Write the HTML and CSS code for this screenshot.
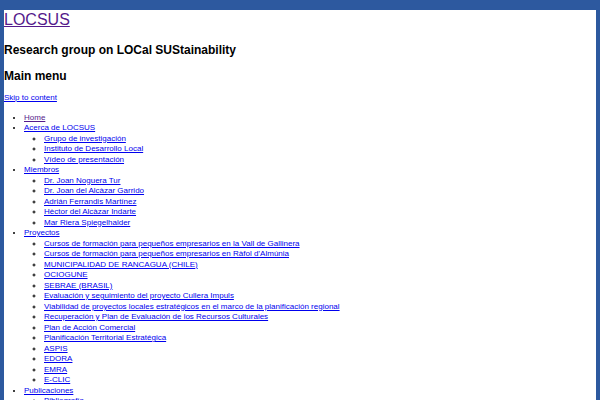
FILE: index.html
```html
<!DOCTYPE html>
<html>
<head>
<meta charset="utf-8">
<title>LOCSUS</title>
<link rel="stylesheet" href="styles.css">
</head>
<body>
<div class="page">
  <header class="site-header">
    <h1 class="site-title"><a class="visited" href="#">LOCSUS</a></h1>
    <h2 class="site-desc">Research group on LOCal SUStainability</h2>
  </header>
  <nav class="main-nav">
    <h3 class="menu-title">Main menu</h3>
    <a class="skip" href="#">Skip to content</a>
    <ul class="menu">
      <li><a class="visited" href="#">Home</a></li>
      <li><a href="#">Acerca de LOCSUS</a>
        <ul class="sub">
          <li><a href="#">Grupo de investigación</a></li>
          <li><a href="#">Instituto de Desarrollo Local</a></li>
          <li><a href="#">Vídeo de presentación</a></li>
        </ul>
      </li>
      <li><a href="#">Miembros</a>
        <ul class="sub">
          <li><a href="#">Dr. Joan Noguera Tur</a></li>
          <li><a href="#">Dr. Joan del Alcàzar Garrido</a></li>
          <li><a href="#">Adrián Ferrandis Martínez</a></li>
          <li><a href="#">Hèctor del Alcàzar Indarte</a></li>
          <li><a href="#">Mar Riera Spiegelhalder</a></li>
        </ul>
      </li>
      <li><a href="#">Proyectos</a>
        <ul class="sub">
          <li><a href="#">Cursos de formación para pequeños empresarios en la Vall de Gallinera</a></li>
          <li><a href="#">Cursos de formación para pequeños empresarios en Ràfol d’Almúnia</a></li>
          <li><a href="#">MUNICIPALIDAD DE RANCAGUA (CHILE)</a></li>
          <li><a href="#">OCIOGUNE</a></li>
          <li><a href="#">SEBRAE (BRASIL)</a></li>
          <li><a href="#">Evaluación y seguimiento del proyecto Cullera Impuls</a></li>
          <li><a href="#">Viabilidad de proyectos locales estratégicos en el marco de la planificación regional</a></li>
          <li><a href="#">Recuperación y Plan de Evaluación de los Recursos Culturales</a></li>
          <li><a href="#">Plan de Acción Comercial</a></li>
          <li><a href="#">Planificación Territorial Estratégica</a></li>
          <li><a href="#">ASPIS</a></li>
          <li><a href="#">EDORA</a></li>
          <li><a href="#">EMRA</a></li>
          <li><a href="#">E-CLIC</a></li>
        </ul>
      </li>
      <li><a href="#">Publicaciones</a>
        <ul class="sub">
          <li><a href="#">Bibliografía</a></li>
          <li><a href="#">Artículos</a></li>
        </ul>
      </li>
    </ul>
  </nav>
</div>
</body>
</html>
```
FILE: styles.css
```css
html {
  background: #2d599f;
  height: 100%;
}
body {
  margin: 10px 4px 0 4px;
  background: #ffffff;
  min-height: calc(100% - 10px);
  font-family: "Liberation Sans", Arial, sans-serif;
  color: #000000;
  overflow: hidden;
}
.page {
  padding-top: 1px;
}
a {
  color: #0000ee;
}
a.visited {
  color: #551a8b;
}
.site-title {
  font-size: 16px;
  font-weight: normal;
  line-height: 18px;
  margin: 0 0 14px 0;
}
.site-desc {
  font-size: 12px;
  font-weight: bold;
  line-height: 14px;
  margin: 0 0 12px 0;
}
.menu-title {
  font-size: 12px;
  font-weight: bold;
  line-height: 14px;
  margin: 0 0 10px 0;
}
.skip {
  display: block;
  width: max-content;
  font-size: 8px;
  line-height: 10.5px;
}
.menu {
  font-size: 8px;
  line-height: 10.5px;
  margin: 9px 0 0 0;
  padding-left: 20px;
  list-style: disc;
}
.menu .sub {
  margin: 0;
  padding-left: 20px;
  list-style: circle;
}
```
